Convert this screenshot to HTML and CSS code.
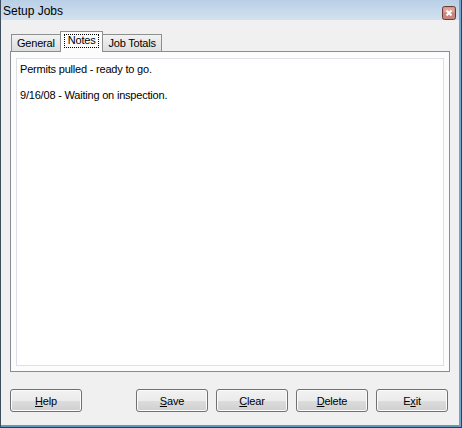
FILE: index.html
```html
<!DOCTYPE html>
<html lang="en">
<head>
  <meta charset="UTF-8" />
  <title>Setup Jobs</title>
  <link rel="stylesheet" href="styles.css">
</head>
<body>
  <div class="window">
    <div class="titlebar">
      <span class="title">Setup Jobs</span>
      <span class="close">
        <svg width="14" height="14" viewBox="0 0 14 14">
          <rect x="0.5" y="0.5" width="13" height="13" rx="2" fill="#c9857b" stroke="#6b3a35"/>
          <rect x="1.5" y="1.5" width="11" height="5" fill="#dca49c"/>
          <path d="M4.5 4.5 L9.5 9.5 M9.5 4.5 L4.5 9.5" stroke="#fff" stroke-width="2"/>
        </svg>
      </span>
    </div>

    <div class="content">
      <div class="tabs">
        <div class="tab">General</div>
        <div class="tab active"><span class="focus">Notes</span></div>
        <div class="tab">Job Totals</div>
      </div>
      <div class="panel">
        <div class="notes">
          <p>Permits pulled - ready to go.</p>
          <p>&nbsp;</p>
          <p>9/16/08 - Waiting on inspection.</p>
        </div>
      </div>

      <div class="buttons">
        <button class="btn"><u>H</u>elp</button>
        <button class="btn push"><u>S</u>ave</button>
        <button class="btn"><u>C</u>lear</button>
        <button class="btn"><u>D</u>elete</button>
        <button class="btn">E<u>x</u>it</button>
      </div>
    </div>
  </div>
</body>
</html>
```

FILE: styles.css
```css
body {
  margin: 0;
  font-family: "Liberation Sans", Arial, sans-serif;
  font-size: 11px;
  letter-spacing: -0.2px;
  color: #000;
}

.window {
  width: 462px;
  height: 428px;
  box-sizing: border-box;
  border-left: 1px solid #3d4f5c;
  border-right: 1px solid #2b4556;
  border-bottom: 1px solid #24404f;
  display: flex;
  flex-direction: column;
  background: #f0f0f0;
}

.titlebar {
  height: 20px;
  display: flex;
  align-items: center;
  justify-content: space-between;
  padding: 0 3px 0 2px;
  background: linear-gradient(#b9cfe6, #d3e1ef);
  border-right: 2px solid #6fa6cb;
}

.title {
  font-size: 12px;
  letter-spacing: 0;
  padding-top: 1px;
}

.close {
  display: flex;
  margin-top: 5px;
}

.content {
  flex: 1;
  border-right: 2px solid #6fa6cb;
  border-bottom: 2px solid #5f98bd;
  padding: 11px 0 0 9px;
}

.tabs {
  display: flex;
  align-items: flex-end;
  height: 20px;
  padding-left: 1px;
}

.tab {
  height: 17px;
  box-sizing: border-box;
  padding: 2px 5px 0 5px;
  border: 1px solid #8e8f8f;
  border-bottom: none;
  background: linear-gradient(#f2f2f2, #dedede);
  margin-right: -1px;
}

.tab.active {
  padding: 2px 3px 0 3px;
  background: #fcfcfc;
  position: relative;
  z-index: 1;
  margin-bottom: -1px;
  height: 21px;
}

.focus {
  display: inline-block;
  padding: 0 4px 2px 4px;
  outline: 1px dotted #000;
  outline-offset: -1px;
}

.panel {
  width: 440px;
  height: 321px;
  box-sizing: border-box;
  border: 1px solid #898c95;
  background: #fcfcfc;
  padding: 6px 5px 5px 5px;
}

.notes {
  height: 100%;
  box-sizing: border-box;
  background: #fff;
  border: 1px solid #dcdfe6;
  padding: 4px 3px;
}

.notes p {
  margin: 0;
  line-height: 13px;
}

.buttons {
  display: flex;
  gap: 8px;
  margin-top: 17px;
}

.btn {
  width: 72px;
  height: 23px;
  font-family: inherit;
  font-size: 11px;
  letter-spacing: -0.2px;
  border: 1px solid #707070;
  border-radius: 3px;
  background: linear-gradient(#f2f2f2 0%, #ebebeb 50%, #dddddd 51%, #cfcfcf 100%);
  box-shadow: inset 0 0 0 1px #fcfcfc;
  padding: 0;
}

.btn.push {
  margin-left: 46px;
}
```
